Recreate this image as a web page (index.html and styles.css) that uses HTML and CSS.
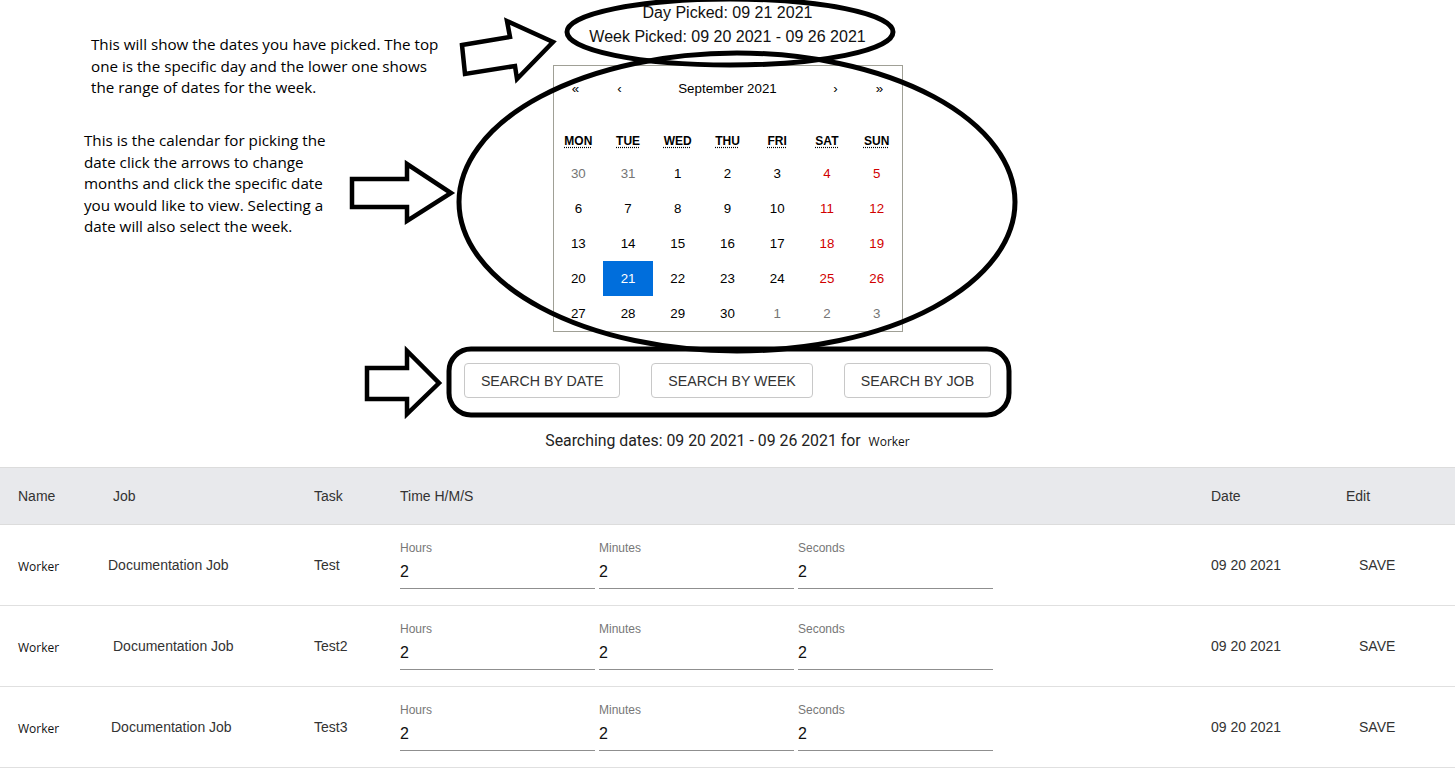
FILE: index.html
```html
<!DOCTYPE html>
<html>
<head>
<meta charset="utf-8">
<link rel="stylesheet" href="styles.css">
</head>
<body>
<div class="page">
  <div class="picked">
    <div>Day Picked: 09 21 2021</div>
    <div>Week Picked: 09 20 2021 - 09 26 2021</div>
  </div>

  <div class="calendar">
    <div class="cal-nav">
      <button class="nav-btn">«</button>
      <button class="nav-btn">‹</button>
      <button class="nav-label">September 2021</button>
      <button class="nav-btn">›</button>
      <button class="nav-btn">»</button>
    </div>
    <div class="weekdays">
      <div><abbr>Mon</abbr></div><div><abbr>Tue</abbr></div><div><abbr>Wed</abbr></div><div><abbr>Thu</abbr></div><div><abbr>Fri</abbr></div><div><abbr>Sat</abbr></div><div><abbr>Sun</abbr></div>
    </div>
    <div class="days">
      <button class="tile other">30</button><button class="tile other">31</button><button class="tile">1</button><button class="tile">2</button><button class="tile">3</button><button class="tile weekend">4</button><button class="tile weekend">5</button>
      <button class="tile">6</button><button class="tile">7</button><button class="tile">8</button><button class="tile">9</button><button class="tile">10</button><button class="tile weekend">11</button><button class="tile weekend">12</button>
      <button class="tile">13</button><button class="tile">14</button><button class="tile">15</button><button class="tile">16</button><button class="tile">17</button><button class="tile weekend">18</button><button class="tile weekend">19</button>
      <button class="tile">20</button><button class="tile active">21</button><button class="tile">22</button><button class="tile">23</button><button class="tile">24</button><button class="tile weekend">25</button><button class="tile weekend">26</button>
      <button class="tile">27</button><button class="tile">28</button><button class="tile">29</button><button class="tile">30</button><button class="tile other">1</button><button class="tile other">2</button><button class="tile other">3</button>
    </div>
  </div>

  <div class="search-buttons">
    <button class="search-btn">SEARCH BY DATE</button>
    <button class="search-btn">SEARCH BY WEEK</button>
    <button class="search-btn">SEARCH BY JOB</button>
  </div>

  <div class="searching">Searching dates: 09 20 2021 - 09 26 2021 for <span class="worker">Worker</span></div>

  <div class="table">
    <div class="thead">
      <div>Name</div><div>Job</div><div>Task</div><div>Time H/M/S</div><div>Date</div><div>Edit</div>
    </div>
    <div class="trow">
      <div class="worker">Worker</div>
      <div class="job">Documentation Job</div>
      <div>Test</div>
      <div class="fields">
        <div class="field"><label>Hours</label><div class="input">2</div></div>
        <div class="field"><label>Minutes</label><div class="input">2</div></div>
        <div class="field"><label>Seconds</label><div class="input">2</div></div>
      </div>
      <div>09 20 2021</div>
      <div class="save">SAVE</div>
    </div>
    <div class="trow">
      <div class="worker">Worker</div>
      <div class="job job-wide">Documentation Job</div>
      <div>Test2</div>
      <div class="fields">
        <div class="field"><label>Hours</label><div class="input">2</div></div>
        <div class="field"><label>Minutes</label><div class="input">2</div></div>
        <div class="field"><label>Seconds</label><div class="input">2</div></div>
      </div>
      <div>09 20 2021</div>
      <div class="save">SAVE</div>
    </div>
    <div class="trow">
      <div class="worker">Worker</div>
      <div class="job job-mid">Documentation Job</div>
      <div>Test3</div>
      <div class="fields">
        <div class="field"><label>Hours</label><div class="input">2</div></div>
        <div class="field"><label>Minutes</label><div class="input">2</div></div>
        <div class="field"><label>Seconds</label><div class="input">2</div></div>
      </div>
      <div>09 20 2021</div>
      <div class="save">SAVE</div>
    </div>
  </div>
</div>

<div class="note note-top">This will show the dates you have picked. The top<br>one is the specific day and the lower one shows<br>the range of dates for the week.</div>
<div class="note note-cal">This is the calendar for picking the<br>date click the arrows to change<br>months and click the specific date<br>you would like to view. Selecting a<br>date will also select the week.</div>

<svg class="marks" width="1455" height="768" viewBox="0 0 1455 768">
  <g fill="none" stroke="#000" stroke-width="5">
    <ellipse cx="730" cy="32" rx="163" ry="33"/>
    <ellipse cx="737" cy="202" rx="278" ry="149"/>
    <rect x="449" y="349" width="560" height="66" rx="22" ry="22"/>
  </g>
  <g fill="#fff" stroke="#000" stroke-width="4.5" stroke-linejoin="miter">
    <polygon points="462,45 510,37 507,21 553,42 517,79 515,66 465,74"/>
    <polygon points="352,179 407,179 407,164 451,193 407,221 407,207 352,207"/>
    <polygon points="367,368 407,368 407,351 439,383 407,414 407,399 367,399"/>
  </g>
</svg>
</body>
</html>
```

FILE: styles.css
```css
html, body {
  margin: 0;
  padding: 0;
  background: #fff;
}
body {
  font-family: "Liberation Sans", Arial, sans-serif;
  color: #000;
  position: relative;
  width: 1455px;
  height: 768px;
  overflow: hidden;
}
.page {
  display: flex;
  flex-direction: column;
  align-items: center;
}
.picked {
  font-size: 16px;
  line-height: 24px;
  text-align: center;
  color: #111;
  padding-top: 1px;
  margin-bottom: -1px;
}
.calendar {
  margin-top: 17px;
  width: 350px;
  box-sizing: border-box;
  border: 1px solid #a0a096;
  background: #fff;
  font-family: "Liberation Sans", Arial, sans-serif;
}
.calendar button {
  font-family: "Liberation Sans", Arial, sans-serif;
  font-size: 13.33px;
  border: 0;
  background: none;
  margin: 0;
  padding: 0;
  color: #000;
}
.cal-nav {
  display: flex;
  height: 44px;
  margin-bottom: 16px;
}
.nav-btn {
  width: 44px;
  flex: none;
}
.nav-label {
  flex: 1;
}
.weekdays {
  display: grid;
  grid-template-columns: repeat(7, 1fr);
  height: 30px;
  align-items: center;
  text-align: center;
  font-size: 12px;
  font-weight: bold;
  text-transform: uppercase;
}
.weekdays abbr {
  text-decoration: underline dotted;
  text-underline-offset: 2px;
}
.days {
  display: grid;
  grid-template-columns: repeat(7, 1fr);
  grid-auto-rows: 35px;
}
.calendar .tile {
  text-align: center;
  line-height: 16px;
}
.calendar .tile.weekend { color: #d10000; }
.calendar .tile.other { color: #757575; }
.calendar .tile.active {
  background: #006edc;
  color: #fff;
}
.search-buttons {
  display: flex;
  gap: 31px;
  margin-top: 31px;
}
.search-btn {
  height: 35px;
  padding: 0 16px;
  border: 1px solid #c8c8c8;
  border-radius: 4px;
  background: #fff;
  font-family: "Liberation Sans", Arial, sans-serif;
  font-size: 14.2px;
  color: #333;
}
.searching {
  margin-top: 33px;
  font-family: Roboto, sans-serif;
  font-size: 15.85px;
  color: #222;
  line-height: 20px;
}
.worker {
  font-family: "Open Sans", sans-serif;
  font-size: 12px;
  margin-left: 4px;
  color: #111;
}
.table {
  margin-top: 15px;
  width: 100%;
  font-size: 14px;
  color: #333;
}
.thead, .trow {
  display: grid;
  grid-template-columns: 95px 201px 86px 811px 135px 1fr;
  padding-left: 18px;
  align-items: center;
}
.thead {
  height: 56px;
  background: #e8e9ec;
  border-top: 1px solid #dcdcdc;
  border-bottom: 1px solid #dcdcdc;
}
.trow {
  height: 80px;
  border-bottom: 1px solid #e0e0e0;
}
.trow .worker {
  margin-left: 0;
  padding-top: 3px;
}
.job {
  margin-left: -5px;
}
.job-wide {
  margin-left: 0;
}
.job-mid {
  margin-left: -2px;
}
.fields {
  display: flex;
  gap: 4px;
}
.field {
  width: 195px;
  display: flex;
  flex-direction: column;
}
.field label {
  font-size: 12px;
  line-height: 14px;
  color: #777;
}
.input {
  font-size: 16px;
  line-height: 20px;
  padding: 7px 0 6px;
  color: #111;
  border-bottom: 1px solid #8f8f8f;
}
.save {
  padding-left: 13px;
}
.note {
  position: absolute;
  font-family: "Open Sans", sans-serif;
  font-size: 15.2px;
  line-height: 21.5px;
  color: #000;
}
.note-top {
  left: 91px;
  top: 34px;
}
.note-cal {
  left: 84px;
  top: 130px;
}
.marks {
  position: absolute;
  left: 0;
  top: 0;
  pointer-events: none;
}
```
